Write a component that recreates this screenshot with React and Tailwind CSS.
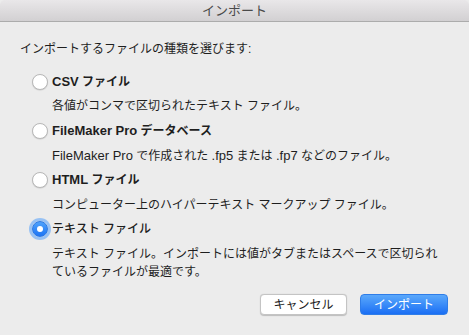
import React, { useState } from "react";

// Latin runs are set a point larger, as the mac system font renders them wider
const L = ({ children }) => <span className="text-[13px]">{children}</span>;

const options = [
  {
    id: "csv",
    label: (
      <>
        <L>CSV</L> ファイル
      </>
    ),
    desc: "各値がコンマで区切られたテキスト ファイル。",
  },
  {
    id: "fmp",
    label: (
      <>
        <L>FileMaker Pro</L> データベース
      </>
    ),
    desc: (
      <>
        <L>FileMaker Pro</L> で作成された <L>.fp5</L> または <L>.fp7</L> などのファイル。
      </>
    ),
  },
  {
    id: "html",
    label: (
      <>
        <L>HTML</L> ファイル
      </>
    ),
    desc: "コンピューター上のハイパーテキスト マークアップ ファイル。",
  },
];

function Radio({ checked, onClick }) {
  if (checked) {
    return (
      <button
        onClick={onClick}
        className="w-[16px] h-[16px] rounded-full bg-gradient-to-b from-[#4ea2fb] to-[#1d74f4] border border-[#2a78e4] ring-[3px] ring-[#82b6f5]/80 flex items-center justify-center shrink-0"
      >
        <span className="w-[6px] h-[6px] rounded-full bg-white" />
      </button>
    );
  }
  return (
    <button
      onClick={onClick}
      className="w-[16px] h-[16px] rounded-full bg-white border border-[#b8b8b8] shadow-[0_0.5px_1px_rgba(0,0,0,0.15)] shrink-0"
    />
  );
}

export default function App() {
  const [selected, setSelected] = useState("text");

  return (
    <div
      className="w-[469px] h-[335px] bg-[#ececec] text-[#1e1e1e] text-[12px] overflow-hidden flex flex-col"
      style={{ fontFamily: '"Liberation Sans", "Noto Sans CJK JP", sans-serif' }}
    >
      {/* title bar */}
      <div className="h-[22px] shrink-0 bg-gradient-to-b from-[#e9e7e9] to-[#d2d0d2] border-b border-[#acacac] flex items-center justify-center text-[13px] text-[#4a4a4a] rounded-t-[5px]">
        インポート
      </div>

      <div className="flex flex-col pt-[18px]">
        <div className="h-[18px] leading-[18px] pl-[20px]">
          インポートするファイルの種類を選びます:
        </div>

        <div className="flex flex-col mt-[11.5px] pl-[32px]">
          {options.map((o) => (
            <React.Fragment key={o.id}>
              <div className="h-[24.6px] flex items-center gap-[4px]">
                <Radio checked={selected === o.id} onClick={() => setSelected(o.id)} />
                <span className="font-bold">{o.label}</span>
              </div>
              <div className="h-[24.6px] flex items-center pl-[20px]">
                <span>{o.desc}</span>
              </div>
            </React.Fragment>
          ))}
          <div className="h-[24.6px] flex items-center gap-[4px]">
            <Radio checked={selected === "text"} onClick={() => setSelected("text")} />
            <span className="font-medium">テキスト ファイル</span>
          </div>
          <div className="pl-[20px] pr-[20px] mt-[3.5px] leading-[18px]">
            テキスト ファイル。インポートには値がタブまたはスペースで区切られているファイルが最適です。
          </div>
        </div>

        <div className="flex justify-end gap-[13px] pr-[21px] mt-[13px]">
          <button className="w-[87px] h-[21px] rounded-[4px] bg-white border border-[#c4c4c4] shadow-[0_0.5px_1px_rgba(0,0,0,0.2)] text-[12px] text-[#222]">
            キャンセル
          </button>
          <button className="w-[88px] h-[21px] rounded-[4px] bg-gradient-to-b from-[#5aa8fb] to-[#1a6ef4] border border-[#2f7de8] text-[12px] text-white">
            インポート
          </button>
        </div>
      </div>
    </div>
  );
}
